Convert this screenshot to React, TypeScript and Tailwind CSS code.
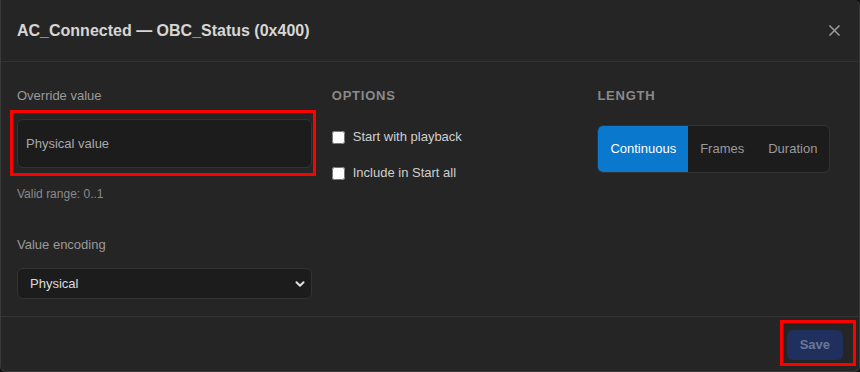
import { ChevronDown } from "lucide-react";

const font = { fontFamily: '"Liberation Sans", Arial, sans-serif' };

function Segmented() {
  const items = ["Continuous", "Frames", "Duration"];
  return (
    <div className="inline-flex rounded-[6px] border border-[#333] bg-[#1c1c1c] overflow-hidden">
      {items.map((it, i) => (
        <div
          key={it}
          className={
            i === 0
              ? "h-[46px] px-3 flex items-center text-[13px] bg-[#0a78cc] text-white"
              : "h-[46px] px-3 flex items-center text-[13px] text-[#9a9a9a]"
          }
        >
          {it}
        </div>
      ))}
    </div>
  );
}

export default function App() {
  return (
    <div className="relative w-[860px] h-[372px] bg-[#121212]" style={font}>
      <div className="w-[860px] h-[372px] flex flex-col bg-[#252525] border-l border-r border-b border-[#3a3a3a] rounded-tr-[6px] rounded-b-[6px]">
        <div className="h-[62px] shrink-0 px-[16px] flex items-center justify-between border-b border-[#333]">
          <h1 className="text-[16px] font-bold text-[#d6d6d6]">AC_Connected — OBC_Status (0x400)</h1>
          <svg width="13" height="13" viewBox="0 0 13 13" className="mr-[2px]">
            <path d="M1.5 1.5 L11.5 11.5 M11.5 1.5 L1.5 11.5" stroke="#9a9a9a" strokeWidth="1.6" />
          </svg>
        </div>

        <div className="flex-1 grid grid-cols-[1.2fr_1fr_1fr] gap-x-5 px-[16px] pt-[26px] pb-[17px] border-b border-[#333]">
          <div className="flex flex-col">
            <label className="text-[13px] leading-[15px] text-[#9a9a9a]">Override value</label>
            <div className="mt-4 h-[49px] rounded-[6px] border border-[#333] bg-[#1c1c1c] flex items-center px-[8px] text-[13px] text-[#a8a8a8]">
              Physical value
            </div>
            <div className="mt-[19px] text-[12px] leading-[14px] text-[#8a8a8a]">Valid range: 0..1</div>
            <label className="mt-[36px] text-[13px] leading-[15px] text-[#9a9a9a]">Value encoding</label>
            <div className="mt-4 h-[31px] rounded-[6px] border border-[#333] bg-[#1c1c1c] flex items-center justify-between pl-[12px] pr-[4px] text-[13px] text-[#dcdcdc]">
              <span>Physical</span>
              <ChevronDown size={14} strokeWidth={3.5} color="#e0e0e0" />
            </div>
          </div>

          <div className="flex flex-col">
            <div className="text-[13px] leading-[15px] font-bold tracking-[0.06em] text-[#8a8a8a]">OPTIONS</div>
            <div className="mt-[24px] flex flex-col gap-4">
              <label className="flex items-center gap-2 h-5 text-[13px] text-[#cfcfcf]">
                <input type="checkbox" className="m-0 w-[13px] h-[13px]" />
                Start with playback
              </label>
              <label className="flex items-center gap-2 h-5 text-[13px] text-[#cfcfcf]">
                <input type="checkbox" className="m-0 w-[13px] h-[13px]" />
                Include in Start all
              </label>
            </div>
          </div>

          <div className="flex flex-col items-start">
            <div className="text-[13px] leading-[15px] font-bold tracking-[0.06em] text-[#8a8a8a]">LENGTH</div>
            <div className="mt-[22px]">
              <Segmented />
            </div>
          </div>
        </div>

        <div className="h-[55px] shrink-0 flex items-center justify-end pr-[16px]">
          <button className="h-[30px] px-[13px] rounded-[6px] bg-[#1f2f5e] text-[13px] font-bold text-[#6c7794]">
            Save
          </button>
        </div>
      </div>

      <div className="absolute left-[10px] top-[110px] w-[306px] h-[66px] border-[3px] border-[#ff0000]" />
      <div className="absolute left-[780px] top-[320px] w-[76px] h-[46px] border-[3px] border-[#ff0000]" />
    </div>
  );
}
